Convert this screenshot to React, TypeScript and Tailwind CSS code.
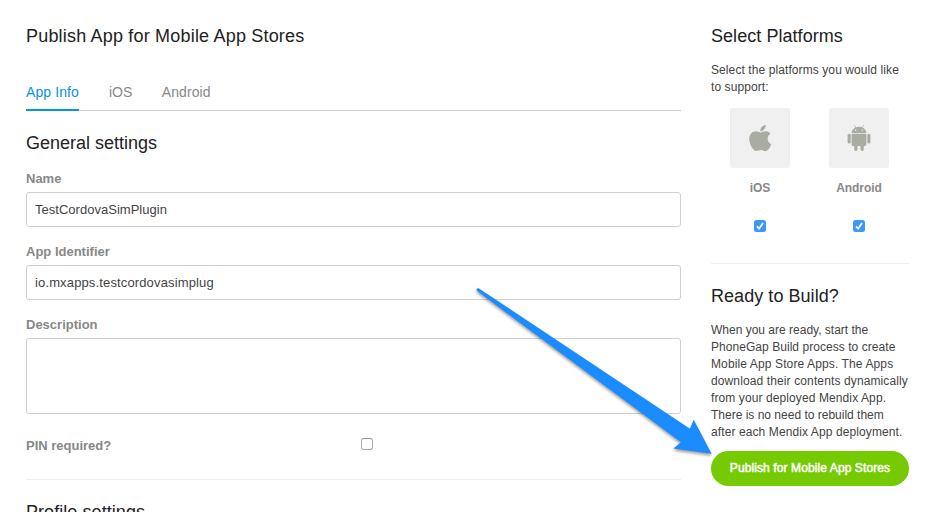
import { FaApple } from "react-icons/fa";
import type { ReactNode } from "react";

function Check() {
  return (
    <span className="flex h-3 w-3 items-center justify-center rounded-[2.5px] bg-[#3b99fc]">
      <svg width="12" height="12" viewBox="0 0 12 12" fill="none" stroke="#fff" strokeWidth="1.7">
        <path d="M3 6.4 L5.1 8.7 L9 3" />
      </svg>
    </span>
  );
}

function AndroidIcon() {
  return (
    <svg width="24" height="28" viewBox="0 0 24 28" fill="#a9ada1">
      <path d="M4.6 9.2C4.8 6.6 6.2 4.7 8.4 3.6L7.1 1.3L7.6 1L9 3.3Q12 2.2 15 3.3L16.4 1L16.9 1.3L15.6 3.6C17.8 4.7 19.2 6.6 19.4 9.2Z" />
      <circle cx="8.6" cy="6.3" r="0.75" fill="#f0f0f0" />
      <circle cx="15.4" cy="6.3" r="0.75" fill="#f0f0f0" />
      <path d="M4.6 10H19.4V20.4Q19.4 22 17.8 22H16.8V25.3A1.65 1.65 0 0 1 13.5 25.3V22H10.5V25.3A1.65 1.65 0 0 1 7.2 25.3V22H6.2Q4.6 22 4.6 20.4Z" />
      <rect x="0.6" y="9.7" width="3.1" height="9.9" rx="1.5" />
      <rect x="20.3" y="9.7" width="3.1" height="9.9" rx="1.5" />
    </svg>
  );
}

function Platform({ name, children }: { name: string; children: ReactNode }) {
  return (
    <div className="flex w-[99px] flex-col items-center">
      <div className="flex h-15 w-15 items-center justify-center rounded-[3px] bg-[#f0f0f0] pl-px">{children}</div>
      <span className="mt-3 mb-6 pl-px text-[12px] leading-4 font-bold tracking-[-0.08px] text-[#888]">{name}</span>
      <Check />
    </div>
  );
}

function Field({ label, value }: { label: string; value: ReactNode }) {
  return (
    <div className="mb-[15px]">
      <div className="mb-1 text-[13px] leading-[19px] font-bold text-[#888]">{label}</div>
      <div className="flex h-[35px] items-center rounded-[3px] border border-[#d0d0d0] px-2 text-[13px] text-[#444]">
        {value}
      </div>
    </div>
  );
}

export default function App() {
  return (
    <div className="relative flex h-[512px] w-[931px] overflow-hidden bg-white pl-[26px] font-['Liberation_Sans',Arial,sans-serif] text-[#444]">
      <main className="w-[655px] shrink-0 pt-[25px]">
        <h1 className="text-[18px] leading-[22px] tracking-[0.19px] text-[#222]">Publish App for Mobile App Stores</h1>
        <nav className="mt-[34px] flex h-[30px] gap-[30px] border-b border-[#d0d0d0] text-[14px] leading-[22px] text-[#888]">
          <span className="h-[30px] border-b-2 border-[#0595db] tracking-[0.1px] text-[#0595db]">App Info</span>
          <span>iOS</span>
          <span className="-ml-[0.5px] tracking-[0.08px]">Android</span>
        </nav>
        <h2 className="mt-[21px] mb-[15px] text-[18px] leading-[22px] text-[#222]">General settings</h2>
        <Field label="Name" value={<span className="tracking-[0.02px]">TestCordovaSimPlugin</span>} />
        <Field label="App Identifier" value={<span className="tracking-[0.14px]">io.mxapps.testcordovasimplug</span>} />
        <div className="mb-1 text-[13px] leading-[19px] font-bold text-[#888]">Description</div>
        <div className="h-[76px] rounded-[3px] border border-[#d0d0d0]" />
        <div className="mt-[22px] flex h-11 border-b border-[#eee]">
          <span className="w-[335px] text-[13px] leading-[19px] font-bold text-[#888]">PIN required?</span>
          <span className="mt-0.5 h-3 w-3 rounded-[3px] border border-[#aaa] border-t-[#929292]" />
        </div>
        <h2 className="mt-[21px] text-[18px] leading-[22px] tracking-[0.06px] text-[#222]">Profile settings</h2>
      </main>
      <aside className="ml-[30px] w-[198px] shrink-0 pt-[25px]">
        <h2 className="text-[18px] leading-[22px] tracking-[0.05px] text-[#222]">Select Platforms</h2>
        <p className="mt-[15px] text-[12px] leading-[17px] tracking-[0.09px] whitespace-nowrap">
          Select the platforms you would like<br />
          to support:
        </p>
        <div className="-ml-px mt-3 flex h-[155px]">
          <Platform name="iOS"><FaApple className="h-[30px] w-[22.5px] text-[#a9ada1]" /></Platform>
          <Platform name="Android"><AndroidIcon /></Platform>
        </div>
        <hr className="border-[#eee]" />
        <h2 className="mt-[21px] text-[18px] leading-[22px] tracking-[0.05px] text-[#222]">Ready to Build?</h2>
        <p className="mt-[15px] text-[12px] leading-[17px] whitespace-nowrap">
          <span>When you are ready, start the</span><br />
          <span className="tracking-[0.05px]">PhoneGap Build process to create</span><br />
          <span className="tracking-[0.12px]">Mobile App Store Apps. The Apps</span><br />
          <span className="tracking-[0.12px]">download their contents dynamically</span><br />
          <span className="tracking-[0.1px]">from your deployed Mendix App.</span><br />
          <span>There is no need to rebuild them</span><br />
          <span className="tracking-[0.1px]">after each Mendix App deployment.</span>
        </p>
        <button className="mt-[10px] flex h-[35px] w-full items-center justify-center rounded-full bg-[#76ca02] pb-0.5 text-[12px] tracking-[0.1px] whitespace-nowrap text-white [-webkit-text-stroke:0.5px_#fff]">
          Publish for Mobile App Stores
        </button>
      </aside>
      <svg className="absolute top-[270px] left-[460px] drop-shadow-[0_2px_1.5px_rgba(0,0,0,0.4)]" width="270" height="210" viewBox="460 270 270 210" fill="#1a8cff">
        <path d="M478.6 288.2L690 428.8L693.7 419.8L711.6 453.8L673.3 448.5L681 442.3L476.8 290.8Q475.8 288 478.6 288.2Z" />
      </svg>
    </div>
  );
}
